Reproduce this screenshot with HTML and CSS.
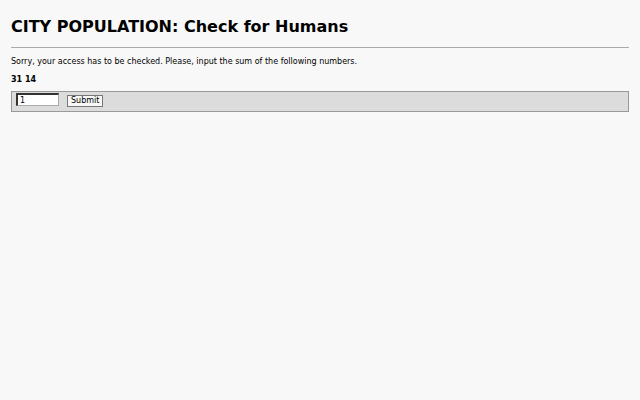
FILE: index.html
```html
<!DOCTYPE html>
<html>
<head>
<meta charset="utf-8">
<link rel="stylesheet" href="styles.css">
</head>
<body>
<div class="page">
<h1 class="title">CITY POPULATION: Check for Humans</h1>
<hr class="rule">
<p class="msg">Sorry, your access has to be checked. Please, input the sum of the following numbers.</p>
<p class="nums">31 14</p>
<form class="box">
<input class="field" type="text" value="1">
<button class="btn" type="button">Submit</button>
</form>
</div>
</body>
</html>
```

FILE: styles.css
```css
html, body {
  margin: 0;
  padding: 0;
  background: #f8f8f8;
}
.page {
  padding: 0 11px 0 11px;
  font-family: "DejaVu Sans", sans-serif;
  color: #000;
}
.title {
  font-size: 16px;
  font-weight: bold;
  margin: 0;
  padding-top: 17px;
  line-height: 19px;
}
.rule {
  border: 0;
  border-top: 1px solid #aaa;
  margin: 11px 0 0 0;
  height: 0;
}
.msg {
  font-size: 8px;
  margin: 9px 0 0 0;
  line-height: 10px;
}
.nums {
  font-size: 8px;
  font-weight: bold;
  margin: 8px 0 0 0;
  line-height: 10px;
}
.box {
  margin: 6px 0 0 0;
  background: #dcdcdc;
  border: 1px solid #999;
  height: 19px;
  display: flex;
  align-items: flex-start;
  padding: 0 4px;
  gap: 8px;
  box-sizing: content-box;
}
.field {
  box-sizing: border-box;
  width: 43px;
  height: 13px;
  margin-top: 1px;
  font-family: "DejaVu Sans", sans-serif;
  font-size: 8px;
  padding: 0 2px;
  border: 1px solid #aaa;
  border-top: 2px solid #333;
  border-left: 2px solid #333;
  background: #fff;
  outline: none;
}
.btn {
  box-sizing: border-box;
  font-family: "DejaVu Sans", sans-serif;
  font-size: 8px;
  padding: 0 3px;
  width: 36px;
  height: 12px;
  line-height: 10px;
  margin: 3px 0 0 0;
  background: #f8f8f8;
  border: 1px solid #777;
  color: #000;
}
```
